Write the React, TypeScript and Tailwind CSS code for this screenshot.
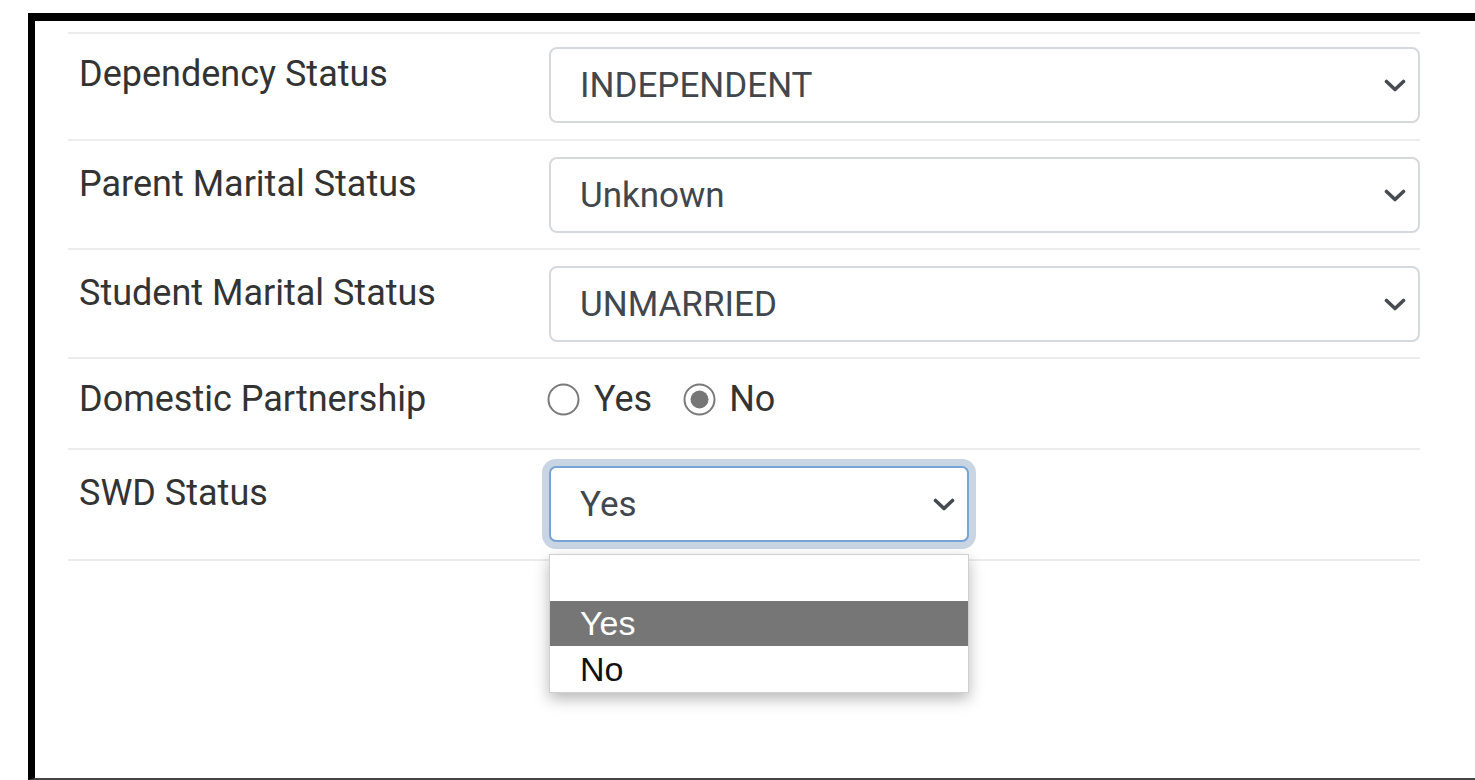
import React from "react";

const labelCls =
  "w-[481px] shrink-0 pl-[11px] text-[36px] leading-[1.5] text-[#333333]";

function Chevron() {
  return (
    <svg width="22" height="13" viewBox="0 0 22 13" className="shrink-0">
      <path
        d="M2.5 2.5 L11 10.5 L19.5 2.5"
        fill="none"
        stroke="#454b51"
        strokeWidth="3.6"
        strokeLinecap="round"
        strokeLinejoin="round"
      />
    </svg>
  );
}

function SelectBox({ value }: { value: string }) {
  return (
    <div className="flex h-[76px] flex-1 items-center justify-between rounded-[8px] border-2 border-[#d5d9de] bg-white pl-[29px] pr-[12px]">
      <span className="pt-[2px] text-[35px] text-[#41474d]">{value}</span>
      <Chevron />
    </div>
  );
}

function Radio({ checked }: { checked: boolean }) {
  return (
    <svg width="33" height="33" viewBox="0 0 33 33" className="shrink-0">
      <circle cx="16.5" cy="16.5" r="15" fill="white" stroke="#7a7a7a" strokeWidth="2" />
      {checked && <circle cx="16.5" cy="16.5" r="9" fill="#767676" />}
    </svg>
  );
}

function SelectRow({ label, value, top }: { label: string; value: string; top: boolean }) {
  return (
    <div
      className={
        top
          ? "flex border-t-2 border-[#ececec] pb-[16px] pt-[13px]"
          : "flex border-t-2 border-[#ececec] pb-[15px] pt-[16px]"
      }
    >
      <div className={labelCls}>{label}</div>
      <SelectBox value={value} />
    </div>
  );
}

export default function App() {
  return (
    <div
      className="h-[780px] w-[1475px] overflow-hidden bg-white pl-[28px] pt-[13px]"
      style={{ fontFamily: "Roboto, 'Liberation Sans', sans-serif" }}
    >
      <div className="h-[767px] border-b-2 border-l-[7px] border-t-[8px] border-b-[#444444] border-l-black border-t-black">
        <div className="ml-[33px] w-[1352px] pt-[11px]">
          <SelectRow top label="Dependency Status" value="INDEPENDENT" />
          <SelectRow top={false} label="Parent Marital Status" value="Unknown" />
          <SelectRow top={false} label="Student Marital Status" value="UNMARRIED" />

          <div className="flex border-t-2 border-[#ececec] pb-[22px] pt-[13px]">
            <div className={labelCls}>Domestic Partnership</div>
            <div className="-ml-[2px] flex h-[54px] items-center text-[36px] leading-[1.5] text-[#333333]">
              <Radio checked={false} />
              <span className="ml-[14px]">Yes</span>
              <span className="ml-[31px]">
                <Radio checked />
              </span>
              <span className="ml-[13px]">No</span>
            </div>
          </div>

          <div className="flex border-t-2 border-[#ececec] pb-[17px] pt-[16px]">
            <div className={labelCls}>SWD Status</div>
            <div className="relative w-[420px]">
              <div className="flex h-[76px] items-center justify-between rounded-[7px] border-2 border-[#76a4d8] bg-white pl-[29px] pr-[12px] shadow-[0_0_0_7px_#c9d5e2]">
                <span className="pt-[2px] text-[35px] text-[#41474d]">Yes</span>
                <Chevron />
              </div>
              <div
                className="absolute left-0 top-[88px] z-10 w-[420px] border border-[#d0d0d0] bg-white shadow-[0_6px_14px_rgba(0,0,0,0.28)]"
                style={{ fontFamily: "'Liberation Sans', Arial, sans-serif" }}
              >
                <div className="h-[46px]" />
                <div className="flex h-[45px] items-center bg-[#767676] pl-[30px] text-[34px] text-white">
                  Yes
                </div>
                <div className="flex h-[46px] items-center pl-[30px] text-[34px] text-[#111111]">
                  No
                </div>
              </div>
            </div>
          </div>
          <div className="border-t-2 border-[#ececec]" />
        </div>
      </div>
    </div>
  );
}
